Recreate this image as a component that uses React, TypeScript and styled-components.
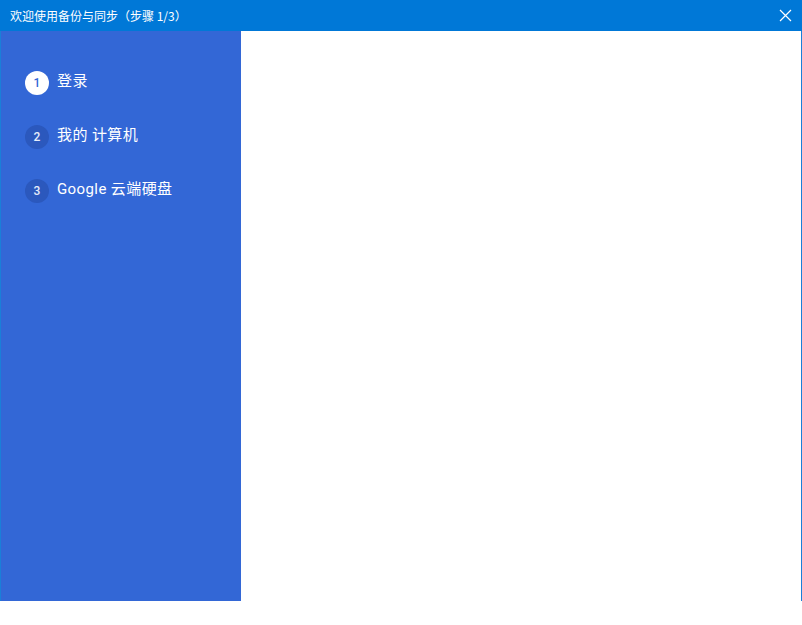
import styled, { createGlobalStyle } from 'styled-components';

const GlobalStyle = createGlobalStyle`
  html, body {
    margin: 0;
    padding: 0;
    background: #ffffff;
  }
`;

const Window = styled.div`
  width: 802px;
  height: 601px;
  box-sizing: border-box;
  border-left: 1px solid #1a7fd8;
  border-right: 1px solid #1a7fd8;
  display: flex;
  flex-direction: column;
  font-family: Roboto, "Noto Sans CJK SC", sans-serif;
`;

const TitleBar = styled.div`
  height: 31px;
  margin: 0 -1px;
  background: #0078d7;
  color: #ffffff;
  display: flex;
  align-items: center;
  justify-content: space-between;
  padding: 0 0 0 10px;
  font-family: "Noto Sans CJK SC", sans-serif;
  font-size: 12px;
  flex-shrink: 0;
`;

const CloseButton = styled.button`
  width: 46px;
  height: 31px;
  border: none;
  background: transparent;
  display: flex;
  align-items: center;
  justify-content: center;
  padding: 0 0 0 12px;
  svg {
    display: block;
  }
`;

const Body = styled.div`
  flex: 1;
  display: flex;
`;

const Sidebar = styled.nav`
  width: 240px;
  background: #3367d6;
  display: flex;
  flex-direction: column;
  gap: 30px;
  padding: 40px 0 0 24px;
  box-sizing: border-box;
`;

const Step = styled.div`
  display: flex;
  align-items: center;
  gap: 8px;
  height: 24px;
  color: #ffffff;
  font-size: 15px;
  letter-spacing: 0.4px;
`;

const StepLabel = styled.span`
  line-height: 1;
  padding-bottom: 3px;
`;

const StepNumber = styled.span<{ $active?: boolean }>`
  width: 24px;
  height: 24px;
  border-radius: 50%;
  display: flex;
  align-items: center;
  justify-content: center;
  font-size: 12px;
  font-weight: 500;
  background: ${p => (p.$active ? '#ffffff' : '#2b58bd')};
  color: ${p => (p.$active ? '#3367d6' : '#e6ecfa')};
`;

const Content = styled.main`
  flex: 1;
  background: #ffffff;
`;

const steps = ['登录', '我的 计算机', 'Google 云端硬盘'];

export default function App() {
  return (
    <>
      <GlobalStyle />
      <Window>
        <TitleBar>
          <span>欢迎使用备份与同步（步骤 1/3）</span>
          <CloseButton aria-label="关闭">
            <svg width="13" height="13" viewBox="0 0 13 13">
              <path d="M1 1 L12 12 M12 1 L1 12" stroke="#ffffff" strokeWidth="1.2" />
            </svg>
          </CloseButton>
        </TitleBar>
        <Body>
          <Sidebar>
            {steps.map((label, i) => (
              <Step key={label}>
                <StepNumber $active={i === 0}>{i + 1}</StepNumber>
                <StepLabel>{label}</StepLabel>
              </Step>
            ))}
          </Sidebar>
          <Content />
        </Body>
      </Window>
    </>
  );
}
